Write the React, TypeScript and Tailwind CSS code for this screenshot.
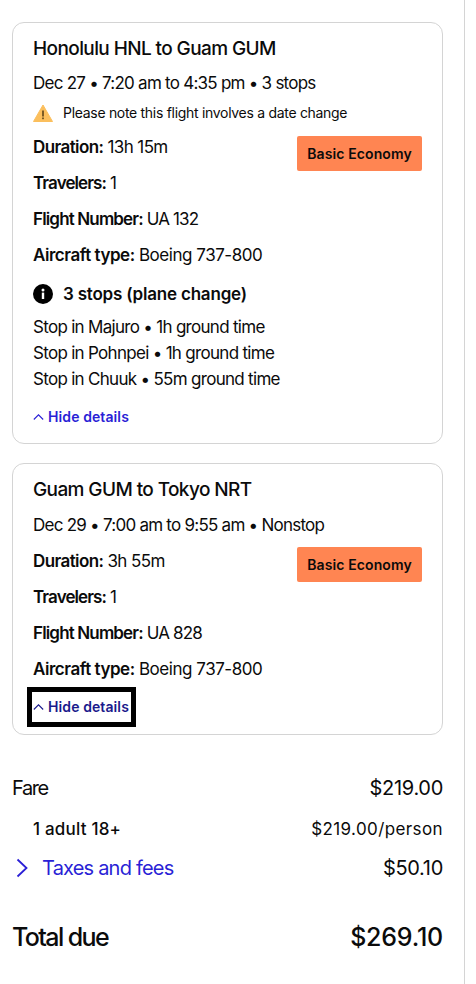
const FONT = "font-['Inter','Noto_Sans',sans-serif]";

function Field({ label, value, tight = "tracking-[-0.6px]" }: { label: string; value: string; tight?: string }) {
  return (
    <p className={`text-[17px] leading-[24px] text-[#0b0b0b] ${tight}`}>
      <span className="font-semibold">{label}:</span> {value}
    </p>
  );
}

function Badge() {
  return (
    <span className="flex h-[35px] w-[125px] items-center justify-center rounded-[2px] bg-[#ff8552] text-[14px] font-semibold tracking-[0.1px] text-[#0b0b0b]">
      Basic Economy
    </span>
  );
}

function HideDetails({ focused = false }: { focused?: boolean }) {
  return (
    <button
      className={`flex items-center gap-[4px] text-[14px] font-semibold tracking-[0.1px] ${
        focused
          ? "-ml-[1px] h-[30px] w-[99px] pl-[1px] leading-[30px] text-[#1a1a8c] outline-[5px] outline-black"
          : "h-[20px] leading-[20px] text-[#2a1fd6]"
      }`}
    >
      <svg width="11" height="6" viewBox="0 0 11 6" fill="none" stroke="currentColor" strokeWidth="1.1">
        <path d="M.8 5.5 5.5.8l4.7 4.7" />
      </svg>
      Hide details
    </button>
  );
}

function FlightCard({
  title,
  when,
  whenClass,
  duration,
  flight,
  badgeClass,
  rowsClass,
  children,
  footer,
}: {
  title: string;
  when: string;
  whenClass: string;
  duration: string;
  flight: string;
  badgeClass: string;
  rowsClass: string;
  children?: React.ReactNode;
  footer: React.ReactNode;
}) {
  return (
    <section className="rounded-[12px] border border-[#d4d4d4] px-[20px]">
      <h2 className="mt-[13px] text-[19px] font-medium leading-[26px] tracking-[-0.6px] text-[#0b0b0b]">{title}</h2>
      <p className={`text-[17px] leading-[24px] tracking-[-0.75px] text-[#0b0b0b] ${whenClass}`}>{when}</p>
      {children}
      <div className={`flex justify-between ${rowsClass}`}>
        <div className="flex flex-col gap-[12px]">
          <Field label="Duration" value={duration} />
          <Field label="Travelers" value="1" tight="tracking-[-0.9px]" />
        </div>
        <div className={badgeClass}>
          <Badge />
        </div>
      </div>
      <div className="mt-[12px] flex flex-col gap-[12px]">
        <Field label="Flight Number" value={flight} tight="tracking-[-0.85px]" />
        <Field label="Aircraft type" value="Boeing 737-800" tight="tracking-[-0.47px]" />
      </div>
      {footer}
    </section>
  );
}

export default function App() {
  return (
    <div className={`${FONT} min-h-[984px] w-[476px] bg-white`}>
      <div className="min-h-[984px] w-[465px] border-r border-[#d4d4d4] pl-[12px] pr-[21px] pt-[22px]">
        <FlightCard
          title="Honolulu HNL to Guam GUM"
          when="Dec 27 • 7:20 am to 4:35 pm • 3 stops"
          whenClass="mt-[9px]"
          duration="13h 15m"
          flight="UA 132"
          badgeClass="mt-[1px]"
          rowsClass=""
          footer={
            <div className="pb-[16px]">
              <div className="mt-[15px] flex items-center gap-[10px]">
                <svg width="20" height="20" viewBox="0 0 20 20">
                  <circle cx="10" cy="10" r="10" fill="#000" />
                  <rect x="8.8" y="8.6" width="2.4" height="6.4" fill="#fff" />
                  <circle cx="10" cy="6" r="1.5" fill="#fff" />
                </svg>
                <span className="text-[17px] font-semibold leading-[24px] tracking-[-0.2px] text-[#0b0b0b]">
                  3 stops (plane change)
                </span>
              </div>
              <div className="mt-[8px] text-[17px] leading-[26px] tracking-[-0.7px] text-[#0b0b0b]">
                <p>Stop in Majuro • 1h ground time</p>
                <p>Stop in Pohnpei • 1h ground time</p>
                <p>Stop in Chuuk • 55m ground time</p>
              </div>
              <div className="mt-[15px]">
                <HideDetails />
              </div>
            </div>
          }
        >
          <div className="mb-[12px] mt-[8px] flex items-center gap-[10px]">
            <svg width="20" height="18" viewBox="0 0 20 18">
              <path d="M10 1 19.5 17.5H.5z" fill="#fbbf5d" stroke="#fbbf5d" strokeLinejoin="round" />
              <rect x="9.2" y="6.5" width="1.6" height="6" fill="#5c4318" />
              <rect x="9.2" y="13.5" width="1.6" height="1.7" fill="#5c4318" />
            </svg>
            <span className="text-[14px] leading-[20px] tracking-[-0.3px] text-[#0b0b0b]">
              Please note this flight involves a date change
            </span>
          </div>
        </FlightCard>

        <div className="mt-[19px]">
          <FlightCard
            title="Guam GUM to Tokyo NRT"
            when="Dec 29 • 7:00 am to 9:55 am • Nonstop"
            whenClass="mt-[10px]"
            duration="3h 55m"
            flight="UA 828"
            badgeClass="-mt-[2px]"
            rowsClass="mt-[12px]"
            footer={
              <div className="mt-[11px] pb-[12px]">
                <HideDetails focused />
              </div>
            }
          />
        </div>

        <div className="mt-[39px] text-[#0b0b0b]">
          <div className="flex items-center justify-between text-[20px] leading-[28px]">
            <span className="tracking-[-1.4px]">Fare</span>
            <span className="tracking-[-0.3px]">$219.00</span>
          </div>
          <div className="mt-[15px] flex items-center justify-between pl-[21px] text-[17px] leading-[24px]">
            <span className="font-medium tracking-[0.2px]">1 adult 18+</span>
            <span className="tracking-[0.4px]">$219.00/person</span>
          </div>
          <div className="mt-[13px] flex items-center justify-between text-[20px] leading-[28px]">
            <span className="flex items-center gap-[14px] pl-[4px] tracking-[-0.8px] text-[#2a1fd6]">
              <svg width="12" height="20" viewBox="0 0 12 20" fill="none" stroke="currentColor" strokeWidth="1.8">
                <path d="M1.5 1.5 10.5 10l-9 8.5" />
              </svg>
              Taxes and fees
            </span>
            <span className="tracking-[-0.3px]">$50.10</span>
          </div>
          <div className="mt-[39px] flex items-center justify-between text-[25px] font-medium leading-[32px]">
            <span className="tracking-[-1.6px]">Total due</span>
            <span className="tracking-[-0.2px]">$269.10</span>
          </div>
        </div>
      </div>
    </div>
  );
}
